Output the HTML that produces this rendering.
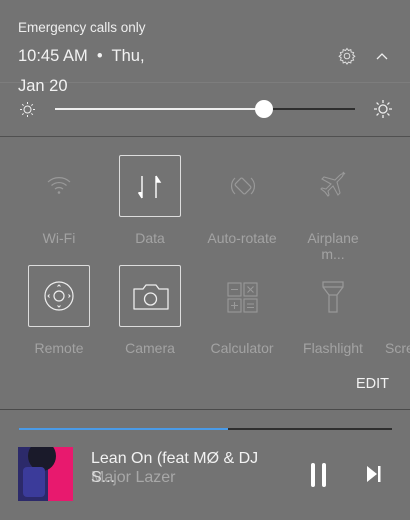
<!DOCTYPE html><html><head><style>
body{margin:0;width:410px;height:520px;background:#737373;position:relative;overflow:hidden;font-family:"Liberation Sans",sans-serif;color:#fff}
.a{position:absolute}
.lbl{position:absolute;width:92px;text-align:center;font-size:14px;color:#a3a3a3;line-height:16px}
.box{position:absolute;width:62px;height:62px;border:1.5px solid #ddd;box-sizing:border-box;border-radius:2px}
svg{position:absolute;overflow:visible}
</style></head><body>
<div class="a" style="left:18px;top:20px;font-size:13.5px;color:#eee">Emergency calls only</div>
<div class="a" style="left:18px;top:47px;font-size:16.5px;color:#f2f2f2">10:45 AM &nbsp;•&nbsp; Thu,</div>
<div class="a" style="left:0;top:82px;width:410px;height:1px;background:#7d7d7d"></div>
<div class="a" style="left:18px;top:77px;font-size:16.5px;color:#f2f2f2">Jan 20</div>
<svg style="left:338px;top:47px" width="18" height="18" viewBox="0 0 18 18"><circle cx="9" cy="9" r="2.8" fill="none" stroke="#ddd"/><path d="M9 1.5l1.5 2 2.3-.8.4 2.4 2.4.4-.8 2.3 2 1.5-2 1.5.8 2.3-2.4.4-.4 2.4-2.3-.8-1.5 2-1.5-2-2.3.8-.4-2.4-2.4-.4.8-2.3-2-1.5 2-1.5-.8-2.3 2.4-.4.4-2.4 2.3.8z" fill="none" stroke="#ddd"/></svg>
<svg style="left:376px;top:52px" width="12" height="8"><path d="M1 7L6 2L11 7" fill="none" stroke="#eee" stroke-width="1.3"/></svg>
<svg style="left:20px;top:102px" width="15" height="15"><circle cx="7.5" cy="7.5" r="3.5" fill="none" stroke="#eee"/><path d="M7.5 0v2M7.5 13v2M0 7.5h2M13 7.5h2M2.2 2.2l1.4 1.4M11.4 11.4l1.4 1.4M2.2 12.8l1.4-1.4M11.4 3.6l1.4-1.4" stroke="#eee"/></svg>
<div class="a" style="left:55px;top:108px;width:210px;height:2px;background:#eee"></div>
<div class="a" style="left:265px;top:108px;width:90px;height:2px;background:#2e2e2e"></div>
<div class="a" style="left:255px;top:100px;width:18px;height:18px;border-radius:50%;background:#fff"></div>
<svg style="left:374px;top:100px" width="18" height="18"><circle cx="9" cy="9" r="4" fill="none" stroke="#eee" stroke-width="1.3"/><path d="M9 0v3M9 15v3M0 9h3M15 9h3M2.6 2.6l2 2M13.4 13.4l2 2M2.6 15.4l2-2M13.4 4.6l2-2" stroke="#eee" stroke-width="1.3"/></svg>
<div class="a" style="left:0;top:136px;width:410px;height:1px;background:#505050"></div>

<svg style="left:47px;top:176px" width="24" height="18"><path d="M1 6a16 16 0 0 1 22 0M4.5 9.5a11 11 0 0 1 15 0M8 13a6 6 0 0 1 8 0" fill="none" stroke="#999" stroke-width="1.2"/><circle cx="12" cy="16.5" r="1.3" fill="#999"/></svg>
<div class="box" style="left:119px;top:155px"></div>
<svg style="left:137px;top:174px" width="28" height="28"><path d="M5 2v22M1.5 18.5L5 24M19 2v22M19 2l4 6h-4" fill="none" stroke="#fff" stroke-width="1.4"/><path d="M1.5 18l3.5 6v-6z M19 2l4 6h-4z" fill="#fff"/></svg>
<svg style="left:228px;top:174px" width="30" height="28"><rect x="8" y="7" width="14" height="10" rx="1.5" transform="rotate(45 15 12)" fill="none" stroke="#999" stroke-width="1.2"/><path d="M7 4a11 11 0 0 0 0 16M23 4a11 11 0 0 1 0 16" fill="none" stroke="#999" stroke-width="1.2"/></svg>
<svg style="left:318px;top:172px" width="30" height="30"><path d="M27 2c-2-1-4 0-6 2l-4 4-11-3-2 2 9 5-5 5-4-1-1 1 4 3 3 4 1-1-1-4 5-5 5 9 2-2-3-11 4-4c2-2 3-4 2-6z" fill="none" stroke="#999" stroke-width="1.1"/></svg>
<div class="lbl" style="left:13px;top:230px">Wi-Fi</div>
<div class="lbl" style="left:104px;top:230px">Data</div>
<div class="lbl" style="left:196px;top:230px">Auto-rotate</div>
<div class="lbl" style="left:287px;top:230px">Airplane<br>m...</div>

<div class="box" style="left:28px;top:265px"></div>
<svg style="left:44px;top:281px" width="30" height="30"><circle cx="15" cy="15" r="14" fill="none" stroke="#eee" stroke-width="1.2"/><circle cx="15" cy="15" r="5" fill="none" stroke="#eee" stroke-width="1.2"/><path d="M13.5 5.5l1.5-1.5 1.5 1.5M13.5 24.5l1.5 1.5 1.5-1.5M5.5 13.5l-1.5 1.5 1.5 1.5M24.5 13.5l1.5 1.5-1.5 1.5" fill="none" stroke="#eee"/></svg>
<div class="box" style="left:119px;top:265px"></div>
<svg style="left:133px;top:283px" width="36" height="28"><path d="M1 6h9l3-4h10l3 4h9v20H1z" fill="none" stroke="#eee" stroke-width="1.3" stroke-linejoin="round"/><circle cx="17.5" cy="16" r="6" fill="none" stroke="#eee" stroke-width="1.3"/></svg>
<svg style="left:227px;top:282px" width="31" height="31" fill="none" stroke="#999" stroke-width="1.1"><rect x="1" y="1" width="13" height="13"/><rect x="17" y="1" width="13" height="13"/><rect x="1" y="17" width="13" height="13"/><rect x="17" y="17" width="13" height="13"/><path d="M4 7.5h7M20.5 4.5l6 6M26.5 4.5l-6 6M4 23.5h7M7.5 20v7M20 22h7M20 25.5h7"/></svg>
<svg style="left:322px;top:281px" width="22" height="32" fill="none" stroke="#999" stroke-width="1.2"><path d="M1 1h20v5L15 14v17H7V14L1 6zM1 6h20M7 14h8"/></svg>
<div class="lbl" style="left:13px;top:340px">Remote</div>
<div class="lbl" style="left:104px;top:340px">Camera</div>
<div class="lbl" style="left:196px;top:340px">Calculator</div>
<div class="lbl" style="left:287px;top:340px">Flashlight</div>
<div class="lbl" style="left:385px;top:340px;text-align:left">Screen</div>
<div class="a" style="left:356px;top:376px;font-size:14.5px;color:#f2f2f2">EDIT</div>
<div class="a" style="left:0;top:409px;width:410px;height:1px;background:#4a4a4a"></div>

<div class="a" style="left:19px;top:428px;width:209px;height:2px;background:#4a9be8"></div>
<div class="a" style="left:228px;top:428px;width:164px;height:2px;background:#2e2e2e"></div>
<div class="a" style="left:18px;top:447px;width:55px;height:54px;background:#e8196e;overflow:hidden">
<div class="a" style="left:0;top:0;width:30px;height:54px;background:#2c2a6a"></div>
<div class="a" style="left:10px;top:-6px;width:28px;height:30px;border-radius:50%;background:#1a1a2a"></div>
<div class="a" style="left:5px;top:20px;width:22px;height:30px;background:#3b3b9a;border-radius:4px"></div>
</div>
<div class="a" style="left:91px;top:450px;font-size:16px;color:#f2f2f2">Lean On (feat MØ &amp; DJ</div>
<div class="a" style="left:91px;top:469px;font-size:16px;color:#a8a8a8">Major Lazer</div>
<div class="a" style="left:91px;top:469px;font-size:16px;color:#ddd">S...</div>
<div class="a" style="left:311px;top:463px;width:4px;height:24px;background:#fff;border-radius:2px"></div>
<div class="a" style="left:322px;top:463px;width:4px;height:24px;background:#fff;border-radius:2px"></div>
<svg style="left:366px;top:465px" width="16" height="18"><path d="M1 1l10 8-10 8z" fill="#fff"/><rect x="12" y="1" width="2.5" height="16" fill="#fff"/></svg>
</body></html>
